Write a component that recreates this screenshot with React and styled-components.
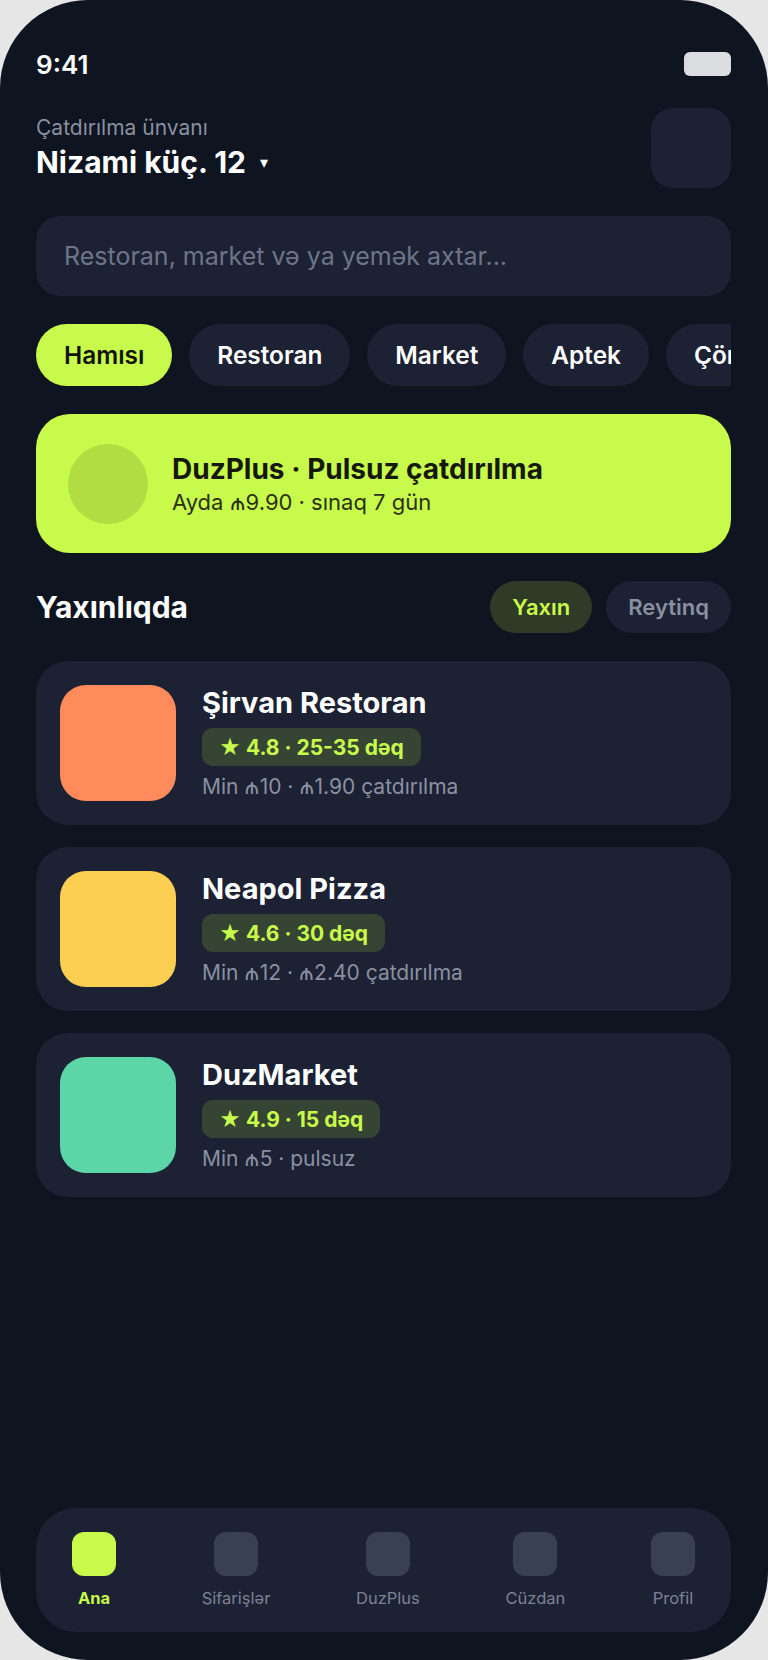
import React from "react";
import styled, { createGlobalStyle } from "styled-components";

const Global = createGlobalStyle`
  html, body { margin: 0; padding: 0; background: #e6e6e6; }
  body { font-family: Inter, "Noto Sans", "DejaVu Sans", sans-serif; -webkit-font-smoothing: antialiased; }
  * { box-sizing: border-box; }
`;

const Phone = styled.div`
  width: 768px;
  height: 1660px;
  background: #0e1420;
  border-radius: 88px;
  overflow: hidden;
  display: flex;
  flex-direction: column;
  padding: 0 37px 28px 36px;
  color: #fff;
`;

const StatusBar = styled.div`
  margin-top: 52px;
  height: 24px;
  display: flex;
  align-items: center;
  justify-content: space-between;
`;

const Time = styled.span`
  font-size: 26px;
  font-weight: 600;
`;

const Battery = styled.div`
  width: 47px;
  height: 24px;
  border-radius: 6px;
  background: #dcdde0;
`;

const Header = styled.div`
  margin-top: 32px;
  height: 80px;
  display: flex;
  align-items: center;
  justify-content: space-between;
`;

const Address = styled.div`
  display: flex;
  flex-direction: column;
  gap: 4px;
`;

const AddressLabel = styled.span`
  font-size: 21px;
  line-height: 24px;
  color: #8a90a0;
`;

const AddressName = styled.span`
  font-size: 30px;
  line-height: 36px;
  font-weight: 700;
  display: flex;
  align-items: center;
  gap: 14px;
`;

const Caret = styled.span`
  font-size: 16px;
  line-height: 1;
`;

const AvatarBox = styled.div`
  width: 80px;
  height: 80px;
  border-radius: 22px;
  background: #1c2134;
`;

const Main = styled.div`
  margin-top: 28px;
  display: flex;
  flex-direction: column;
  gap: 28px;
`;

const Search = styled.div`
  height: 80px;
  border-radius: 24px;
  background: #1c2134;
  display: flex;
  align-items: center;
  padding: 0 28px;
  font-size: 25px;
  color: #6e7589;
`;

const Chips = styled.div`
  display: flex;
  gap: 17px;
  overflow: hidden;
`;

const Chip = styled.div`
  flex-shrink: 0;
  height: 62px;
  padding: 0 28px;
  border-radius: 31px;
  display: flex;
  align-items: center;
  font-size: 24.4px;
  font-weight: 600;
  background: ${(p) => (p.$active ? "#c8fa4b" : "#1c2134")};
  color: ${(p) => (p.$active ? "#11140c" : "#ffffff")};
`;

const Promo = styled.div`
  height: 139px;
  border-radius: 34px;
  background: #c8fa4b;
  display: flex;
  align-items: center;
  gap: 24px;
  padding: 0 32px;
  color: #15190d;
`;

const PromoCircle = styled.div`
  width: 80px;
  height: 80px;
  border-radius: 50%;
  background: #b1dd43;
  flex-shrink: 0;
`;

const PromoText = styled.div`
  display: flex;
  flex-direction: column;
  gap: 2px;
`;

const PromoTitle = styled.span`
  font-size: 28px;
  line-height: 34px;
  font-weight: 700;
`;

const PromoSub = styled.span`
  font-size: 22px;
  line-height: 28px;
  color: #2a3117;
`;

const SectionHead = styled.div`
  height: 52px;
  display: flex;
  align-items: center;
  justify-content: space-between;
`;

const SectionTitle = styled.span`
  font-size: 30px;
  font-weight: 700;
`;

const Toggles = styled.div`
  display: flex;
  gap: 14px;
`;

const Toggle = styled.div`
  height: 52px;
  padding: 0 22px;
  border-radius: 26px;
  display: flex;
  align-items: center;
  font-size: 22px;
  font-weight: 600;
  background: ${(p) => (p.$active ? "#2f3b26" : "#1c2134")};
  color: ${(p) => (p.$active ? "#c8fa4b" : "#8a90a0")};
`;

const List = styled.div`
  display: flex;
  flex-direction: column;
  gap: 22px;
`;

const Card = styled.div`
  height: 164px;
  border-radius: 32px;
  background: #1c2134;
  display: flex;
  align-items: center;
  gap: 26px;
  padding: 0 24px;
`;

const Thumb = styled.div`
  width: 116px;
  height: 116px;
  border-radius: 26px;
  background: ${(p) => p.$color};
  flex-shrink: 0;
`;

const Info = styled.div`
  display: flex;
  flex-direction: column;
  align-items: flex-start;
  gap: 8px;
`;

const CardTitle = styled.span`
  font-size: 29px;
  line-height: 34px;
  font-weight: 700;
`;

const Badge = styled.span`
  height: 38px;
  padding: 0 17px;
  border-radius: 11px;
  background: #364533;
  color: #c8fa4b;
  font-size: 21px;
  font-weight: 700;
  display: flex;
  align-items: center;
`;

const Meta = styled.span`
  font-size: 21px;
  line-height: 26px;
  color: #8a90a0;
`;

const Nav = styled.div`
  margin-top: auto;
  height: 124px;
  border-radius: 40px;
  background: #1c2134;
  display: flex;
  align-items: center;
  justify-content: space-between;
  padding: 0 36px;
`;

const NavItem = styled.div`
  display: flex;
  flex-direction: column;
  align-items: center;
  gap: 12px;
`;

const NavIcon = styled.div`
  width: 44px;
  height: 44px;
  border-radius: 12px;
  background: ${(p) => (p.$active ? "#c8fa4b" : "#394051")};
`;

const NavLabel = styled.span`
  font-size: 16.5px;
  line-height: 20px;
  font-weight: ${(p) => (p.$active ? 700 : 400)};
  color: ${(p) => (p.$active ? "#c8fa4b" : "#7c8294")};
`;

const chips = ["Hamısı", "Restoran", "Market", "Aptek", "Çörək"];

const places = [
  { name: "Şirvan Restoran", badge: "★ 4.8 · 25-35 dəq", meta: "Min ₼10 · ₼1.90 çatdırılma", color: "#ff8a5b" },
  { name: "Neapol Pizza", badge: "★ 4.6 · 30 dəq", meta: "Min ₼12 · ₼2.40 çatdırılma", color: "#fccf52" },
  { name: "DuzMarket", badge: "★ 4.9 · 15 dəq", meta: "Min ₼5 · pulsuz", color: "#5cd6a7" },
];

const navs = ["Ana", "Sifarişlər", "DuzPlus", "Cüzdan", "Profil"];

export default function App() {
  return (
    <>
      <Global />
      <Phone>
        <StatusBar>
          <Time>9:41</Time>
          <Battery />
        </StatusBar>
        <Header>
          <Address>
            <AddressLabel>Çatdırılma ünvanı</AddressLabel>
            <AddressName>
              Nizami küç. 12 <Caret>▾</Caret>
            </AddressName>
          </Address>
          <AvatarBox />
        </Header>
        <Main>
          <Search>Restoran, market və ya yemək axtar...</Search>
          <Chips>
            {chips.map((c, i) => (
              <Chip key={c} $active={i === 0}>{c}</Chip>
            ))}
          </Chips>
          <Promo>
            <PromoCircle />
            <PromoText>
              <PromoTitle>DuzPlus · Pulsuz çatdırılma</PromoTitle>
              <PromoSub>Ayda ₼9.90 · sınaq 7 gün</PromoSub>
            </PromoText>
          </Promo>
          <SectionHead>
            <SectionTitle>Yaxınlıqda</SectionTitle>
            <Toggles>
              <Toggle $active>Yaxın</Toggle>
              <Toggle>Reytinq</Toggle>
            </Toggles>
          </SectionHead>
          <List>
            {places.map((p) => (
              <Card key={p.name}>
                <Thumb $color={p.color} />
                <Info>
                  <CardTitle>{p.name}</CardTitle>
                  <Badge>{p.badge}</Badge>
                  <Meta>{p.meta}</Meta>
                </Info>
              </Card>
            ))}
          </List>
        </Main>
        <Nav>
          {navs.map((n, i) => (
            <NavItem key={n}>
              <NavIcon $active={i === 0} />
              <NavLabel $active={i === 0}>{n}</NavLabel>
            </NavItem>
          ))}
        </Nav>
      </Phone>
    </>
  );
}
